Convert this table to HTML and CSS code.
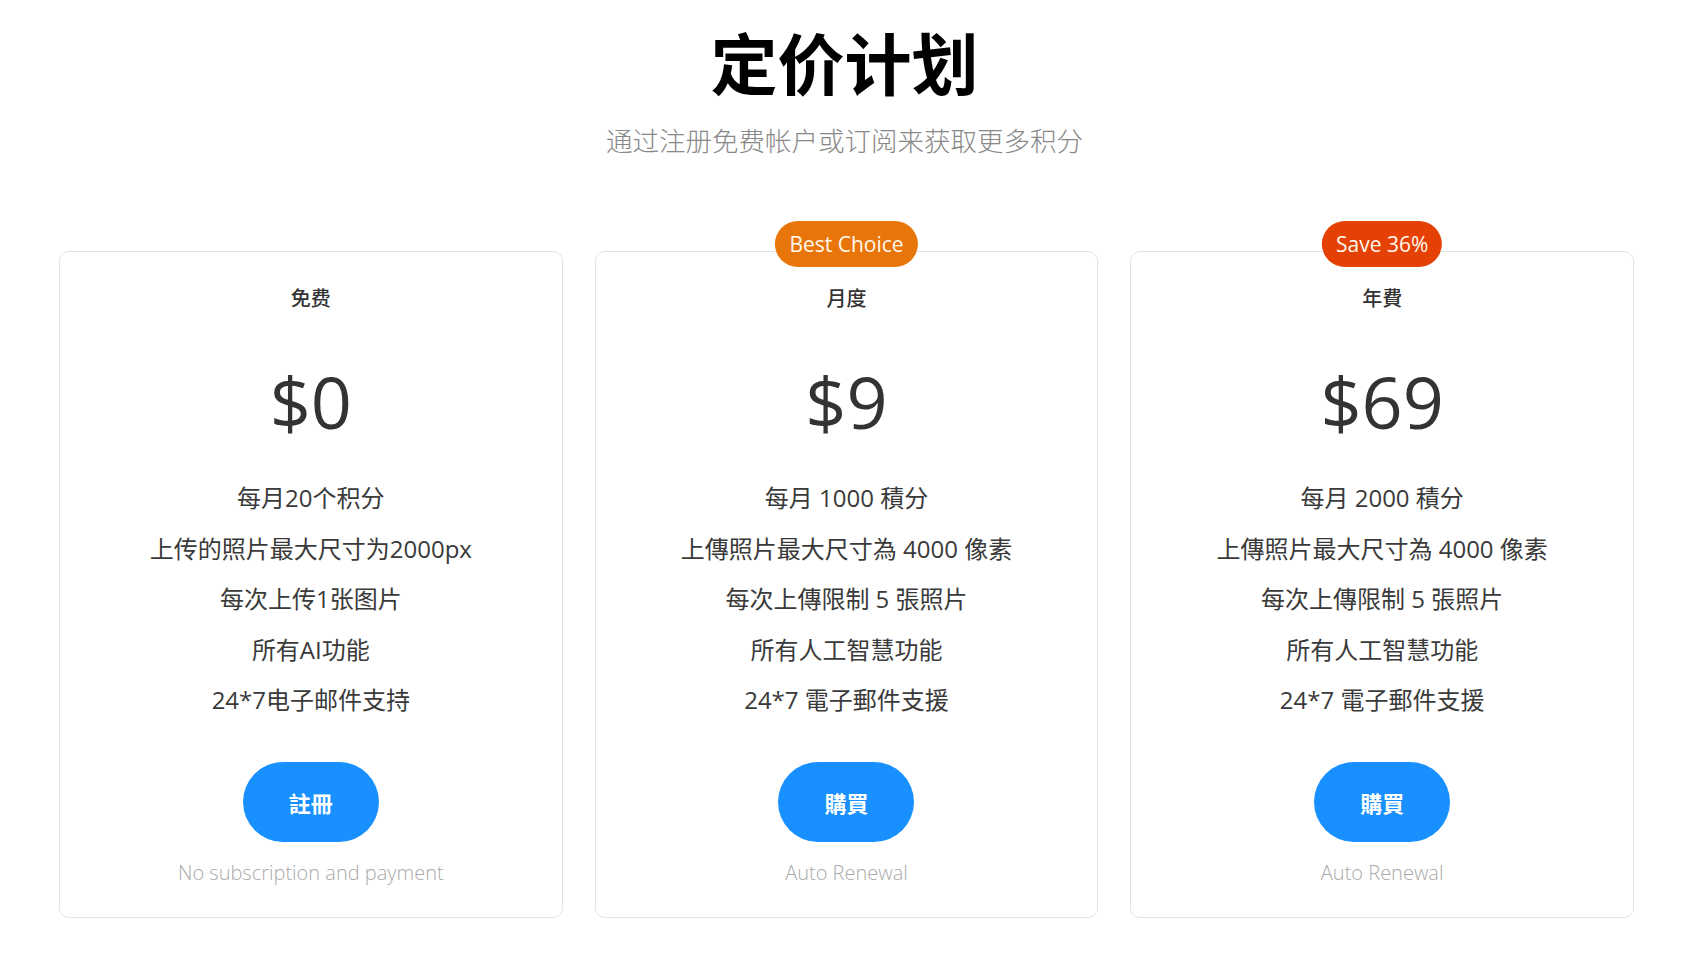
FILE: index.html
```html
<!DOCTYPE html>
<html lang="zh-CN">

<head>
    <meta charset="UTF-8">
    <meta name="viewport" content="width=device-width, initial-scale=1.0">
    <title>定价计划</title>
    <link rel="stylesheet" href="styles.css">
</head>

<body>
    <div class="header">
        <h1>定价计划</h1>
        <p class="subtitle">通过注册免费帐户或订阅来获取更多积分</p>
    </div>

    <div class="plans">
        <div class="plan">
            <div class="plan-name">免费</div>
            <div class="price">$0</div>
            <ul class="features">
                <li>每月20个积分</li>
                <li>上传的照片最大尺寸为2000px</li>
                <li>每次上传1张图片</li>
                <li>所有AI功能</li>
                <li>24*7电子邮件支持</li>
            </ul>
            <button class="btn tc">註冊</button>
            <div class="note">No subscription and payment</div>
        </div>

        <div class="plan">
            <span class="badge badge-best">Best Choice</span>
            <div class="plan-name">月度</div>
            <div class="price">$9</div>
            <ul class="features tc">
                <li>每月 1000 積分</li>
                <li>上傳照片最大尺寸為 4000 像素</li>
                <li>每次上傳限制 5 張照片</li>
                <li>所有人工智慧功能</li>
                <li>24*7 電子郵件支援</li>
            </ul>
            <button class="btn tc">購買</button>
            <div class="note">Auto Renewal</div>
        </div>

        <div class="plan">
            <span class="badge badge-save">Save 36%</span>
            <div class="plan-name tc">年費</div>
            <div class="price">$69</div>
            <ul class="features tc">
                <li>每月 2000 積分</li>
                <li>上傳照片最大尺寸為 4000 像素</li>
                <li>每次上傳限制 5 張照片</li>
                <li>所有人工智慧功能</li>
                <li>24*7 電子郵件支援</li>
            </ul>
            <button class="btn tc">購買</button>
            <div class="note">Auto Renewal</div>
        </div>
    </div>
</body>

</html>
```

FILE: styles.css
```css
body {
    margin: 0;
    padding: 0;
    background-color: #ffffff;
    font-family: "Open Sans", "Noto Sans CJK SC", sans-serif;
    color: #333333;
}

.tc {
    font-family: "Open Sans", "Noto Sans CJK TC", sans-serif;
}

.header {
    text-align: center;
}

.header h1 {
    margin: 22px 0 0;
    font-family: "Noto Sans CJK SC", sans-serif;
    font-size: 67px;
    line-height: 78px;
    font-weight: 700;
    color: #000000;
}

.subtitle {
    margin: 24px 0 0;
    font-size: 26.5px;
    line-height: 34px;
    font-weight: 300;
    color: #888888;
}

.plans {
    max-width: 1575px;
    margin: 93px auto 0;
    padding-left: 4px;
    display: grid;
    grid-template-columns: repeat(3, 1fr);
    gap: 32px;
}

.plan {
    position: relative;
    border: 1px solid #e2e2e2;
    border-radius: 10px;
    padding: 33px 20px 30px;
    display: flex;
    flex-direction: column;
    align-items: center;
    text-align: center;
}

.badge {
    position: absolute;
    top: -31px;
    left: 50%;
    transform: translateX(-50%);
    height: 46px;
    padding: 0 14px;
    border-radius: 23px;
    font-size: 21px;
    line-height: 46px;
    color: #fff8ec;
    white-space: nowrap;
}

.badge-best {
    background-color: #e8750a;
}

.badge-save {
    background-color: #e54104;
}

.plan-name {
    font-size: 20px;
    line-height: 28px;
    font-weight: 500;
    color: #333333;
}

.price {
    margin-top: 43px;
    font-size: 72px;
    line-height: 90px;
    color: #333333;
}

.features {
    list-style: none;
    margin: 27px 0 0;
    padding: 0;
    font-size: 24px;
    line-height: 50.5px;
    font-weight: 400;
    color: #3a3a3a;
}

.btn {
    margin-top: 36px;
    width: 136px;
    height: 80px;
    border: none;
    border-radius: 40px;
    background-color: #1890ff;
    color: #ffffff;
    font-size: 22px;
    font-weight: 700;
    cursor: pointer;
}

.btn:hover {
    background-color: #0f7ae5;
}

.note {
    margin-top: 17px;
    font-size: 20px;
    line-height: 28px;
    font-weight: 300;
    color: #aaaaaa;
}
```
